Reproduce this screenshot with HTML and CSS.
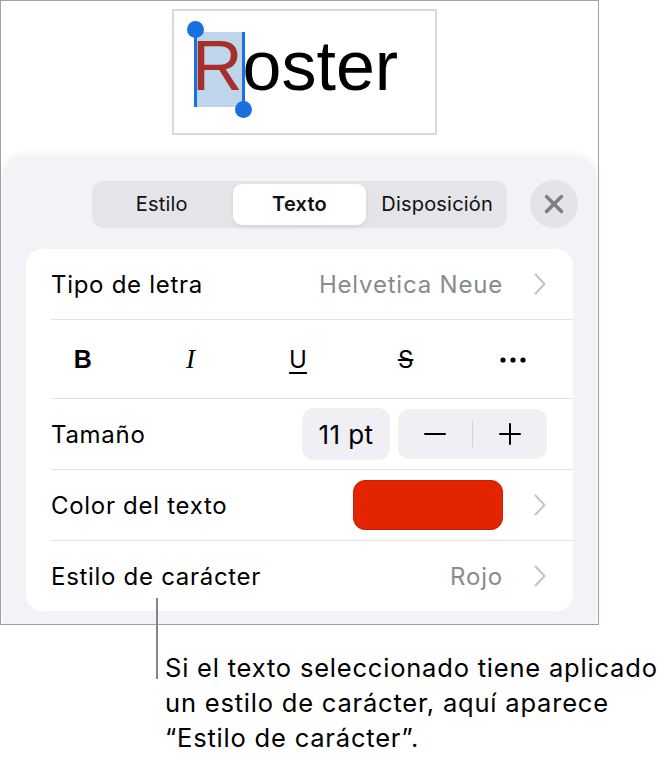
FILE: index.html
```html
<!DOCTYPE html>
<html lang="es">
<head>
<meta charset="utf-8">
<title>Texto</title>
<link rel="stylesheet" href="styles.css">
</head>
<body>
<div class="frame">
  <div class="canvas">
    <div class="textbox">
      <span class="word"><span class="red">R</span>oster</span>
      <span class="selection"></span>
      <span class="bar bar-left"></span>
      <span class="bar bar-right"></span>
      <span class="dot dot-top"></span>
      <span class="dot dot-bottom"></span>
    </div>
  </div>
  <div class="sheet">
    <div class="toolbar">
      <div class="segmented">
        <div class="seg">Estilo</div>
        <div class="seg seg-active">Texto</div>
        <div class="seg">Disposición</div>
      </div>
      <div class="close">
        <svg width="20" height="20" viewBox="0 0 20 20"><path d="M2.5 2.5 L17.5 17.5 M17.5 2.5 L2.5 17.5" stroke="#7d7d82" stroke-width="3.4" stroke-linecap="round" fill="none"/></svg>
      </div>
    </div>
    <div class="card">
      <div class="row row-first">
        <div class="row-inner">
          <span class="label">Tipo de letra</span>
          <span class="value">Helvetica Neue</span>
          <svg class="chev" width="12" height="22" viewBox="0 0 12 22"><polyline points="1.5,1.5 10.5,11 1.5,20.5" fill="none" stroke="#c4c4c7" stroke-width="2" stroke-linecap="round" stroke-linejoin="round"/></svg>
        </div>
      </div>
      <div class="row row-format">
        <div class="format">
          <span class="fbtn f-bold">B</span>
          <span class="fbtn f-italic">I</span>
          <span class="fbtn f-under">U</span>
          <span class="fbtn f-strike">S</span>
          <span class="fbtn">
            <svg width="26" height="6" viewBox="0 0 26 6"><circle cx="3" cy="3" r="2.6" fill="#000"/><circle cx="13" cy="3" r="2.6" fill="#000"/><circle cx="23" cy="3" r="2.6" fill="#000"/></svg>
          </span>
        </div>
      </div>
      <div class="row">
        <div class="row-inner row-inner-size">
          <span class="label">Tamaño</span>
          <span class="pill">11 pt</span>
          <span class="stepper">
            <span class="step">
              <svg width="22" height="22" viewBox="0 0 22 22"><line x1="1" y1="11" x2="21" y2="11" stroke="#000" stroke-width="2" stroke-linecap="round"/></svg>
            </span>
            <span class="step-div"></span>
            <span class="step">
              <svg width="22" height="22" viewBox="0 0 22 22"><path d="M1 11 H21 M11 1 V21" stroke="#000" stroke-width="2" stroke-linecap="round" fill="none"/></svg>
            </span>
          </span>
        </div>
      </div>
      <div class="row">
        <div class="row-inner">
          <span class="label">Color del texto</span>
          <span class="swatch"></span>
          <svg class="chev" width="12" height="22" viewBox="0 0 12 22"><polyline points="1.5,1.5 10.5,11 1.5,20.5" fill="none" stroke="#c4c4c7" stroke-width="2" stroke-linecap="round" stroke-linejoin="round"/></svg>
        </div>
      </div>
      <div class="row row-last">
        <div class="row-inner">
          <span class="label">Estilo de carácter</span>
          <span class="value">Rojo</span>
          <svg class="chev" width="12" height="22" viewBox="0 0 12 22"><polyline points="1.5,1.5 10.5,11 1.5,20.5" fill="none" stroke="#c4c4c7" stroke-width="2" stroke-linecap="round" stroke-linejoin="round"/></svg>
        </div>
      </div>
    </div>
  </div>
</div>
<div class="callout">
  <span class="leader"></span>
  <p class="callout-text">Si el texto seleccionado tiene aplicado<br>un estilo de carácter, aquí aparece<br>“Estilo de carácter”.</p>
</div>
</body>
</html>
```

FILE: styles.css
```css
* { box-sizing: border-box; }
html, body { margin: 0; padding: 0; background: #fff; }
body {
  font-family: Inter, "Noto Sans", "Liberation Sans", sans-serif;
  color: #000;
  width: 668px;
  height: 761px;
  overflow: hidden;
}

.frame {
  width: 599px;
  height: 625px;
  border: 1px solid #a3a3a3;
  background: #fff;
  display: flex;
  flex-direction: column;
}

.canvas {
  height: 155px;
  padding: 8px 0 0 171px;
  flex: none;
}

.textbox {
  position: relative;
  width: 265px;
  height: 126px;
  border: 2px solid #d9d9d9;
  padding: 20px 0 0 18px;
}

.word {
  display: block;
  font-family: "Liberation Sans", Arial, sans-serif;
  font-size: 70px;
  line-height: 70px;
  color: #000;
  position: relative;
  z-index: 2;
}
.red { color: #a62f2a; }

.selection {
  position: absolute;
  left: 22px;
  top: 21px;
  width: 47px;
  height: 75px;
  background: #bfd5ec;
  z-index: 1;
}
.bar {
  position: absolute;
  top: 21px;
  width: 3px;
  height: 75px;
  background: #1b6fe0;
  z-index: 3;
}
.bar-left { left: 20px; }
.bar-right { left: 68px; }
.dot {
  position: absolute;
  width: 17px;
  height: 17px;
  border-radius: 50%;
  background: #1b6fe0;
  z-index: 3;
}
.dot-top { left: 13px; top: 10px; }
.dot-bottom { left: 61px; top: 90px; }

.sheet {
  flex: 1;
  margin: 0 2px;
  background: #f2f2f7;
  border-radius: 22px 22px 0 0;
  box-shadow: 0 -1px 8px rgba(0, 0, 0, 0.07);
  padding: 24px 23px 13px;
  display: flex;
  flex-direction: column;
  gap: 21px;
}

.toolbar {
  display: grid;
  grid-template-columns: 1fr auto 1fr;
  align-items: center;
  margin: 0 -23px;
}
.segmented {
  grid-column: 2;
  width: 415px;
  height: 47px;
  background: #e4e4e9;
  border-radius: 12px;
  padding: 3px;
  display: grid;
  grid-template-columns: 1fr 1fr 1fr;
  gap: 4px;
}
.seg {
  display: flex;
  align-items: center;
  justify-content: center;
  font-size: 20px;
  color: #111;
  border-radius: 9px;
  letter-spacing: 0.2px;
}
.seg-active {
  background: #fff;
  font-weight: 600;
  box-shadow: 0 2px 5px rgba(0, 0, 0, 0.08);
}
.close {
  grid-column: 3;
  justify-self: end;
  margin-right: 18px;
  width: 48px;
  height: 48px;
  border-radius: 50%;
  background: #e3e3e8;
  display: flex;
  align-items: center;
  justify-content: center;
}

.card {
  background: #fff;
  border-radius: 16px;
  display: flex;
  flex-direction: column;
}
.row {
  padding-left: 25px;
  height: 71px;
  display: flex;
}
.row-format { height: 79px; padding-left: 0; position: relative; }
.row-last { height: 70px; }
.row-inner {
  flex: 1;
  display: flex;
  align-items: center;
  border-bottom: 1px solid #e3e3e6;
  padding-right: 27px;
}
.row-last .row-inner { border-bottom: none; }
.label {
  font-size: 24px;
  letter-spacing: 0.7px;
  flex: 1;
}
.value {
  font-size: 24px;
  letter-spacing: 0.8px;
  color: #8a8a8e;
  margin-right: 31px;
}
.chev { flex: none; }

.format {
  flex: 1;
  display: grid;
  grid-template-columns: repeat(5, 1fr);
  align-items: center;
  padding: 0 6px 0 3px;
}
.row-format::after {
  content: "";
  position: absolute;
  left: 25px;
  right: 0;
  bottom: 0;
  height: 1px;
  background: #e3e3e6;
}
.fbtn {
  display: flex;
  justify-content: center;
  align-items: center;
  font-size: 24px;
  height: 40px;
}
.f-bold { font-weight: 700; font-family: "Liberation Sans", Arial, sans-serif; font-size: 25px; }
.f-italic { font-style: italic; font-family: "Liberation Serif", "Times New Roman", serif; font-size: 27px; }
.f-under { text-decoration: underline; text-underline-offset: 4px; text-decoration-thickness: 2px; }
.f-strike { text-decoration: line-through; text-decoration-thickness: 2px; }

.row-inner-size { padding-right: 26px; }
.pill {
  width: 88px;
  height: 52px;
  border-radius: 12px;
  background: #efeff4;
  display: flex;
  align-items: center;
  justify-content: center;
  font-size: 26px;
  letter-spacing: 0.4px;
  margin-right: 8px;
}
.stepper {
  width: 149px;
  height: 50px;
  border-radius: 12px;
  background: #efeff4;
  display: flex;
  align-items: center;
}
.step {
  flex: 1;
  display: flex;
  justify-content: center;
  align-items: center;
}
.step-div {
  width: 1px;
  height: 26px;
  background: #d1d1d6;
}

.swatch {
  width: 150px;
  height: 50px;
  border-radius: 12px;
  background: #e22400;
  border: 1px solid #c81f00;
  margin-right: 31px;
}

.callout {
  position: relative;
  padding: 25px 0 0 165px;
}
.leader {
  position: absolute;
  left: 156px;
  top: -27px;
  width: 2px;
  height: 81px;
  background: #858585;
}
.callout-text {
  margin: 0;
  font-size: 25.5px;
  letter-spacing: 0.8px;
  line-height: 35px;
  color: #000;
  white-space: nowrap;
}
```
